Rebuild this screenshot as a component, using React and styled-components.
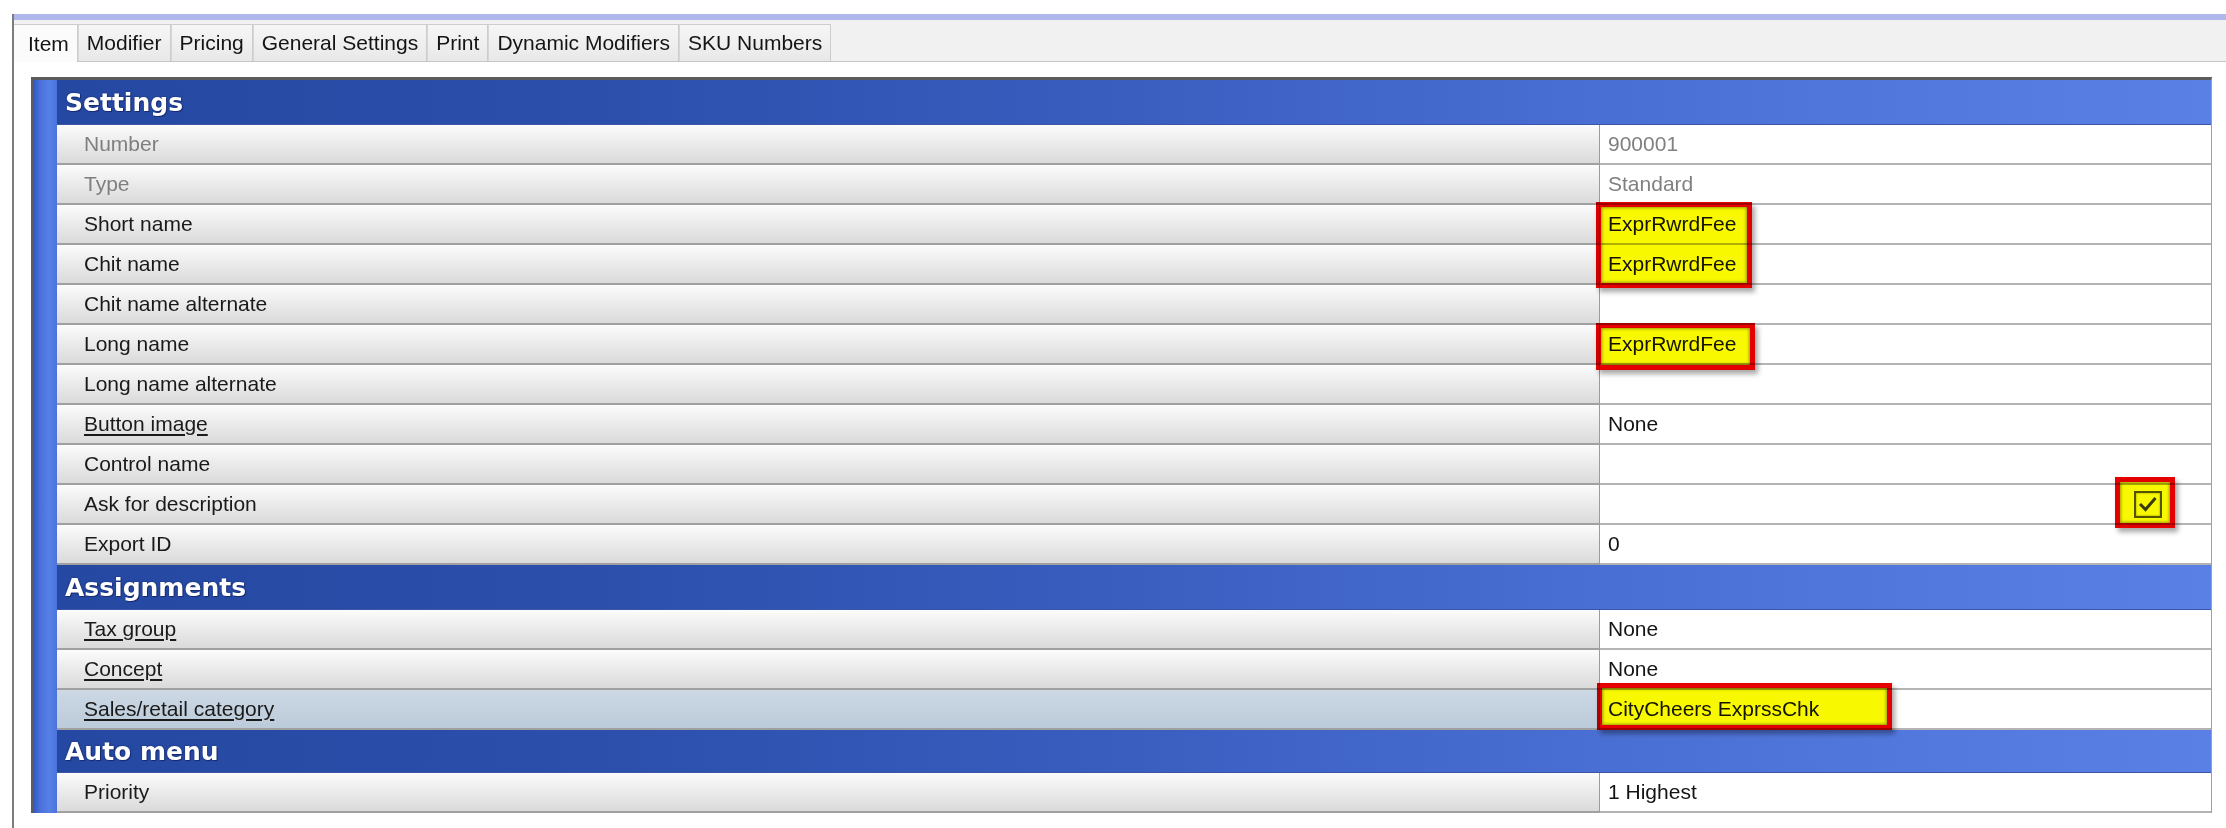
import React from "react";
import styled, { createGlobalStyle } from "styled-components";

const GlobalStyle = createGlobalStyle`
  html, body {
    margin: 0;
    padding: 0;
    background: #fff;
  }
  body {
    font-family: "Liberation Sans", Arial, sans-serif;
    color: #1c1c1c;
  }
`;

const Window = styled.div`
  margin: 14px 0 0 12px;
  height: 814px;
  border-left: 2px solid #7c7c7c;
  box-sizing: border-box;
  overflow: hidden;
`;

const TopBand = styled.div`
  height: 6px;
  background: #b0b7eb;
`;

const TabStrip = styled.div`
  display: flex;
  align-items: flex-end;
  height: 42px;
  background: #f1f1f1;
  border-bottom: 1px solid #c6c6c6;
  box-sizing: border-box;
`;

const Tab = styled.div`
  display: flex;
  align-items: center;
  box-sizing: border-box;
  height: ${(p) => (p.$active ? "38px" : "37px")};
  margin-bottom: ${(p) => (p.$active ? "-1px" : "0")};
  padding: ${(p) => (p.$active ? "0 8px 0 14px" : "0 8px")};
  font-size: 21px;
  color: #141414;
  white-space: nowrap;
  background: ${(p) =>
    p.$active ? "#fbfbfb" : "linear-gradient(#f6f6f6, #e8e8e8)"};
  border: 1px solid #cdcdcd;
  border-left: ${(p) => (p.$active ? "none" : "1px solid #d6d6d6")};
  border-bottom: none;
`;

const Content = styled.div`
  padding: 15px 14px 0 17px;
`;

const Grid = styled.div`
  border-top: 3px solid #5c5c5c;
  border-left: 2px solid #5c5c5c;
  border-right: 1px solid #a0a0a0;
`;

const Section = styled.div`
  display: flex;
`;

const Strip = styled.div`
  flex: none;
  width: 24px;
  background: linear-gradient(
    90deg,
    #3157c2 0%,
    #4a71da 30%,
    #5781e6 70%,
    #4a72dc 100%
  );
`;

const SectionBody = styled.div`
  flex: 1;
  min-width: 0;
`;

const GroupHeader = styled.div`
  display: flex;
  align-items: center;
  box-sizing: border-box;
  height: ${(p) => p.$h}px;
  padding-left: 8px;
  font-family: "DejaVu Sans", Verdana, sans-serif;
  font-weight: bold;
  font-size: 25px;
  color: #fff;
  text-shadow: 0 0 2px rgba(16, 30, 90, 0.8), 1px 1px 0 #1b2f78;
  background: linear-gradient(
    90deg,
    #2548a2 0%,
    #2b4fab 25%,
    #3a5ec0 50%,
    #4a6fd4 72%,
    #5a80e6 100%
  );
  border-bottom: 1px solid #3a56a8;
`;

const Row = styled.div`
  display: grid;
  grid-template-columns: 1fr 611px;
  height: 40px;
`;

const Label = styled.div`
  display: flex;
  align-items: center;
  box-sizing: border-box;
  padding-left: 27px;
  font-size: 21px;
  color: ${(p) => (p.$muted ? "#7f7f7f" : "#1a1a1a")};
  text-decoration: ${(p) => (p.$link ? "underline" : "none")};
  text-underline-offset: 3px;
  background: ${(p) =>
    p.$selected
      ? "linear-gradient(#ccd8e4, #bccbda)"
      : "linear-gradient(#fcfcfc 0%, #ececec 45%, #dadada 100%)"};
  border-bottom: 2px solid #a0a0a0;
  border-right: 1px solid #9c9c9c;
  white-space: nowrap;
`;

const Value = styled.div`
  position: relative;
  display: flex;
  align-items: center;
  justify-content: ${(p) => (p.$end ? "flex-end" : "flex-start")};
  box-sizing: border-box;
  padding: ${(p) => (p.$end ? "0 49px 0 8px" : "0 0 0 8px")};
  font-size: 21px;
  color: ${(p) => (p.$muted ? "#808080" : "#141414")};
  background: #fff;
  border-bottom: 2px solid #b4b4b4;
  white-space: nowrap;
`;

// yellow marker box with a red frame, laid over a value cell
const Mark = styled.div`
  position: absolute;
  z-index: 2;
  left: ${(p) => p.$left}px;
  top: ${(p) => p.$top}px;
  width: ${(p) => p.$w}px;
  height: ${(p) => p.$h}px;
  box-sizing: border-box;
  border: 5px solid #e40000;
  background: #f8f800;
  box-shadow: inset 0 0 3px 1px #9a9a00, 3px 4px 5px rgba(0, 0, 0, 0.35);
  mix-blend-mode: multiply;
  pointer-events: none;
`;

const CheckBox = styled.div`
  width: 28px;
  height: 27px;
  box-sizing: border-box;
  border: 2px solid #555;
  box-shadow: inset 0 0 2px #888;
  display: flex;
  align-items: center;
  justify-content: center;
`;

const tabs = [
  "Item",
  "Modifier",
  "Pricing",
  "General Settings",
  "Print",
  "Dynamic Modifiers",
  "SKU Numbers",
];

const sections = [
  {
    title: "Settings",
    height: 45,
    rows: [
      { label: "Number", value: "900001", muted: true },
      { label: "Type", value: "Standard", muted: true },
      {
        label: "Short name",
        value: "ExprRwrdFee",
        mark: { left: -4, top: -3, w: 156, h: 86 },
      },
      { label: "Chit name", value: "ExprRwrdFee" },
      { label: "Chit name alternate", value: "" },
      {
        label: "Long name",
        value: "ExprRwrdFee",
        mark: { left: -4, top: -2, w: 159, h: 47 },
      },
      { label: "Long name alternate", value: "" },
      { label: "Button image", value: "None", link: true },
      { label: "Control name", value: "" },
      {
        label: "Ask for description",
        check: true,
        mark: { left: 515, top: -8, w: 60, h: 51 },
      },
      { label: "Export ID", value: "0" },
    ],
  },
  {
    title: "Assignments",
    height: 45,
    rows: [
      { label: "Tax group", value: "None", link: true },
      { label: "Concept", value: "None", link: true },
      {
        label: "Sales/retail category",
        value: "CityCheers ExprssChk",
        link: true,
        selected: true,
        mark: { left: -3, top: -7, w: 295, h: 47 },
      },
    ],
  },
  {
    title: "Auto menu",
    height: 43,
    rows: [{ label: "Priority", value: "1 Highest" }],
  },
];

const Check = () => (
  <svg width="22" height="22" viewBox="0 0 22 22">
    <polyline
      points="3,11 8.5,16.5 18.5,5"
      fill="none"
      stroke="#3c3c3c"
      strokeWidth="3"
    />
  </svg>
);

export default function App() {
  return (
    <>
      <GlobalStyle />
      <Window>
        <TopBand />
        <TabStrip>
          {tabs.map((t, i) => (
            <Tab key={t} $active={i === 0}>
              {t}
            </Tab>
          ))}
        </TabStrip>
        <Content>
          <Grid>
            {sections.map((s) => (
              <Section key={s.title}>
                <Strip />
                <SectionBody>
                  <GroupHeader $h={s.height}>{s.title}</GroupHeader>
                  {s.rows.map((r) => (
                    <Row key={r.label}>
                      <Label
                        $muted={r.muted}
                        $link={r.link}
                        $selected={r.selected}
                      >
                        {r.label}
                      </Label>
                      <Value $muted={r.muted} $end={r.check}>
                        {r.check ? (
                          <CheckBox>
                            <Check />
                          </CheckBox>
                        ) : (
                          r.value
                        )}
                        {r.mark && (
                          <Mark
                            $left={r.mark.left}
                            $top={r.mark.top}
                            $w={r.mark.w}
                            $h={r.mark.h}
                          />
                        )}
                      </Value>
                    </Row>
                  ))}
                </SectionBody>
              </Section>
            ))}
          </Grid>
        </Content>
      </Window>
    </>
  );
}
